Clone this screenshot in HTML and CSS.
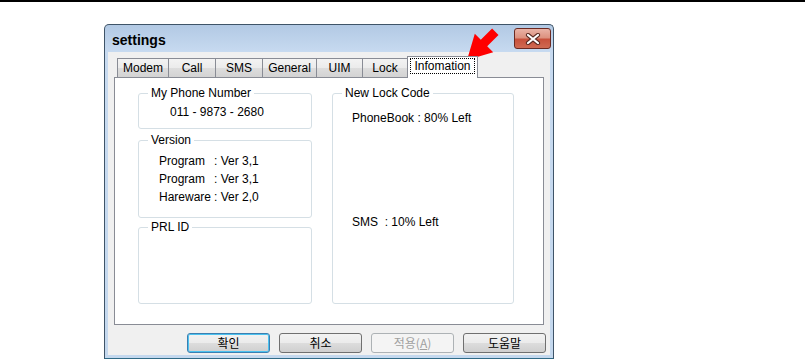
FILE: index.html
```html
<!DOCTYPE html>
<html>
<head>
<meta charset="utf-8">
<title>settings</title>
<link rel="stylesheet" href="styles.css">
</head>
<body>
<div class="topline"></div>
<div class="window">
  <div class="titlebar">
    <span class="title">settings</span>
    <div class="close">
      <svg width="16" height="12" viewBox="0 0 16 12">
        <path d="M3 2 L13 10 M13 2 L3 10" stroke="#5a2a22" stroke-width="4.2" stroke-linecap="round"/>
        <path d="M3 2 L13 10 M13 2 L3 10" stroke="#ffffff" stroke-width="2.2" stroke-linecap="round"/>
      </svg>
    </div>
  </div>
  <div class="client">
    <div class="tabs">
      <div class="tab t-modem">Modem</div>
      <div class="tab t-call">Call</div>
      <div class="tab t-sms">SMS</div>
      <div class="tab t-general">General</div>
      <div class="tab t-uim">UIM</div>
      <div class="tab t-lock">Lock</div>
      <div class="tab t-info active"><span class="focus">Infomation</span></div>
    </div>
    <div class="panel">
      <div class="col-left">
        <div class="group g-phone">
          <div class="legend">My Phone Number</div>
          <div class="phone">011 - 9873 - 2680</div>
        </div>
        <div class="group g-version">
          <div class="legend">Version</div>
          <div class="ver-grid">
            <span>Program</span><span>: Ver 3,1</span>
            <span>Program</span><span>: Ver 3,1</span>
            <span>Hareware</span><span>: Ver 2,0</span>
          </div>
        </div>
        <div class="group g-prl">
          <div class="legend">PRL ID</div>
        </div>
      </div>
      <div class="group g-lock">
        <div class="legend">New Lock Code</div>
        <div class="lock-line first">PhoneBook : 80% Left</div>
        <div class="lock-line second">SMS  : 10% Left</div>
      </div>
    </div>
    <div class="buttons">
      <div class="btn default">확인</div>
      <div class="btn">취소</div>
      <div class="btn disabled">적용(<u>A</u>)</div>
      <div class="btn">도움말</div>
    </div>
  </div>
</div>
<svg class="arrow" width="44" height="38" viewBox="460 24 44 38">
  <polygon points="467,60 474.8,33.8 480.8,39.8 492.1,28.5 498.5,34.9 487.2,46.2 493.2,52.2" fill="#ff0000"/>
</svg>
</body>
</html>
```
FILE: styles.css
```css
html, body {
  margin: 0;
  padding: 0;
  background: #ffffff;
}
body {
  font-family: "Liberation Sans", Arial, sans-serif;
  font-size: 12px;
  color: #000;
  width: 805px;
  height: 360px;
  overflow: hidden;
  position: relative;
}
.topline {
  height: 2px;
  background: #000;
}
.window {
  margin: 22px 0 0 104px;
  width: 450px;
  height: 335px;
  box-sizing: border-box;
  border: 1px solid #3f5468;
  border-bottom-color: #2f6a86;
  border-radius: 5px 5px 0 0;
  background: linear-gradient(#b2c9e4, #c7daf0 27px, #c4d8ee);
  display: flex;
  flex-direction: column;
}
.titlebar {
  height: 27px;
  flex: none;
  display: flex;
  align-items: flex-start;
  justify-content: space-between;
  padding: 3px 2px 0 7px;
  box-sizing: border-box;
}
.title {
  font-weight: bold;
  font-size: 14px;
  line-height: 16px;
  margin-top: 4px;
  color: #000;
}
.close {
  width: 37px;
  height: 21px;
  box-sizing: border-box;
  border: 1px solid #6b2a22;
  border-radius: 3px;
  background: linear-gradient(#eab3a6, #dd9280 45%, #c8513c 55%, #cf6a52);
  display: flex;
  align-items: center;
  justify-content: center;
}
.client {
  flex: 1;
  margin: 0 3px 3px;
  background: #f0f0f0;
  padding: 4px 6px 0 6px;
  display: flex;
  flex-direction: column;
}
.tabs {
  display: flex;
  align-items: flex-end;
  padding-left: 3px;
  height: 21px;
}
.tab {
  height: 19px;
  box-sizing: border-box;
  border: 1px solid #898c95;
  border-bottom: none;
  background: linear-gradient(#f3f3f3, #ebebeb 50%, #dddddd 50%, #d3d3d3);
  display: flex;
  align-items: center;
  justify-content: center;
  line-height: 14px;
  margin-left: -1px;
}
.t-modem { width: 52px; margin-left: 0; }
.t-call { width: 48px; }
.t-sms { width: 48px; }
.t-general { width: 55px; }
.t-uim { width: 47px; }
.t-lock { width: 46px; }
.t-info { width: 71px; }
.tab.active {
  height: 22px;
  margin-bottom: -1px;
  background: #ffffff;
  position: relative;
  z-index: 1;
  align-items: flex-start;
  padding-top: 2px;
}
.focus {
  outline: 1px dotted #000;
  outline-offset: 0;
  padding: 0 3px;
  line-height: 14px;
}
.panel {
  height: 248px;
  box-sizing: border-box;
  border: 1px solid #898c95;
  background: #ffffff;
  padding: 15px 0 0 23px;
  display: flex;
  gap: 20px;
}
.col-left {
  width: 174px;
  display: flex;
  flex-direction: column;
}
.group {
  border: 1px solid #d5dfe5;
  border-radius: 3px;
  box-sizing: border-box;
}
.g-phone { height: 36px; }
.g-version { height: 78px; margin-top: 11px; }
.g-prl { height: 77px; margin-top: 9px; }
.g-lock { width: 182px; height: 211px; }
.legend {
  margin: -8px 0 0 9px;
  padding: 0 3px;
  width: fit-content;
  background: #ffffff;
  line-height: 14px;
}
.phone {
  margin: 5px 0 0 31px;
  line-height: 14px;
}
.ver-grid {
  margin: 5px 0 0 20px;
  display: grid;
  grid-template-columns: auto auto;
  justify-content: start;
  column-gap: 3px;
  line-height: 18px;
}
.lock-line {
  margin-left: 19px;
  line-height: 14px;
  white-space: pre;
}
.lock-line.first { margin-top: 11px; }
.lock-line.second { margin-top: 90px; }
.buttons {
  display: flex;
  justify-content: flex-end;
  gap: 9px;
  margin: 8px -2px 0 0;
}
.btn {
  width: 83px;
  height: 20px;
  box-sizing: border-box;
  border: 1px solid #707070;
  border-radius: 3px;
  background: linear-gradient(#f2f2f2, #ebebeb 50%, #dddddd 50%, #cfcfcf);
  font-family: "Noto Sans CJK KR", "Liberation Sans", sans-serif;
  font-size: 12px;
  line-height: 16px;
  display: flex;
  align-items: center;
  justify-content: center;
  color: #000;
}
.btn.default {
  border-color: #3c7fb1;
  box-shadow: inset 0 0 0 1px #4cc2ef;
}
.btn.disabled {
  border-color: #adb2b5;
  background: #f4f4f4;
  color: #a0a0a0;
}
.arrow {
  position: absolute;
  left: 460px;
  top: 24px;
}
```
